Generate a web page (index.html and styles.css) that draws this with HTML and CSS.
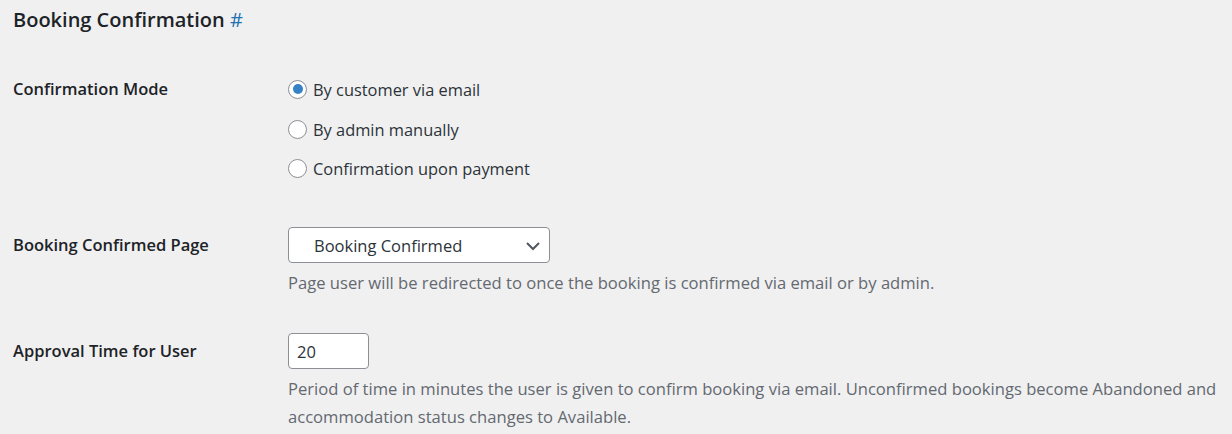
FILE: index.html
```html
<!DOCTYPE html>
<html lang="en">
<head>
<meta charset="utf-8">
<title>Booking Confirmation</title>
<link rel="stylesheet" href="styles.css">
</head>
<body>
<div class="wrap">
  <h2 class="section-title">Booking Confirmation <a class="anchor" href="#">#</a></h2>

  <div class="form-table">
    <div class="row row-mode">
      <div class="label">Confirmation Mode</div>
      <div class="field">
        <div class="radio-list">
          <label class="radio-item"><span class="radio checked"></span><span class="radio-text">By customer via email</span></label>
          <label class="radio-item"><span class="radio"></span><span class="radio-text">By admin manually</span></label>
          <label class="radio-item"><span class="radio"></span><span class="radio-text">Confirmation upon payment</span></label>
        </div>
      </div>
    </div>

    <div class="row row-page">
      <div class="label label-control">Booking Confirmed Page</div>
      <div class="field">
        <div class="select">
          <span class="select-text">Booking Confirmed</span>
          <svg class="chevron" width="16" height="10" viewBox="0 0 16 10"><path d="M2 2 L8 8 L14 2" fill="none" stroke="#50575e" stroke-width="2"/></svg>
        </div>
        <p class="description">Page user will be redirected to once the booking is confirmed via email or by admin.</p>
      </div>
    </div>

    <div class="row row-time">
      <div class="label label-control">Approval Time for User</div>
      <div class="field">
        <div class="input">20</div>
        <p class="description">Period of time in minutes the user is given to confirm booking via email. Unconfirmed bookings become Abandoned and accommodation status changes to Available.</p>
      </div>
    </div>
  </div>
</div>
</body>
</html>
```

FILE: styles.css
```css
* { box-sizing: border-box; }

html, body {
  margin: 0;
  padding: 0;
  background: #f0f0f1;
  font-family: "Open Sans", "Noto Sans", sans-serif;
  color: #1d2327;
}

.wrap {
  padding: 8px 8px 0 13px;
}

.section-title {
  margin: 0;
  font-size: 20px;
  line-height: 24px;
  font-weight: 600;
  color: #1d2327;
}

.anchor {
  color: #2271b1;
  text-decoration: none;
  font-weight: 400;
}

.form-table {
  margin-top: 37px;
  display: flex;
  flex-direction: column;
}

.row {
  display: grid;
  grid-template-columns: 275px 1fr;
}

.row-page { margin-top: 39px; }
.row-time { margin-top: 36px; }

.label {
  font-size: 16.5px;
  font-weight: 600;
  line-height: 40px;
  color: #1d2327;
}

.label-control { line-height: 36px; }

.radio-list {
  display: flex;
  flex-direction: column;
}

.radio-item {
  display: flex;
  align-items: center;
  height: 40px;
  gap: 6px;
  font-size: 16.4px;
  color: #2c3338;
}

.radio-item:nth-child(3) { height: 39px; }

.radio {
  width: 19px;
  height: 19px;
  border: 1px solid #8c8f94;
  border-radius: 50%;
  background: #fff;
  display: flex;
  align-items: center;
  justify-content: center;
  flex: none;
}

.radio.checked::after {
  content: "";
  width: 10px;
  height: 10px;
  border-radius: 50%;
  background: #3582c4;
}

.select {
  width: 262px;
  height: 36px;
  border: 1px solid #8c8f94;
  border-radius: 4px;
  background: #fff;
  display: flex;
  align-items: center;
  justify-content: space-between;
  padding: 0 8px 0 25px;
  font-size: 16.5px;
  color: #2c3338;
}

.chevron { flex: none; margin-top: 1px; }

.input {
  width: 81px;
  height: 36px;
  border: 1px solid #8c8f94;
  border-radius: 4px;
  background: #fff;
  display: flex;
  align-items: center;
  padding-left: 8px;
  font-size: 16.5px;
  color: #2c3338;
}

.description {
  margin: 6px 0 0;
  font-size: 16.6px;
  line-height: 28px;
  color: #646970;
}
```
